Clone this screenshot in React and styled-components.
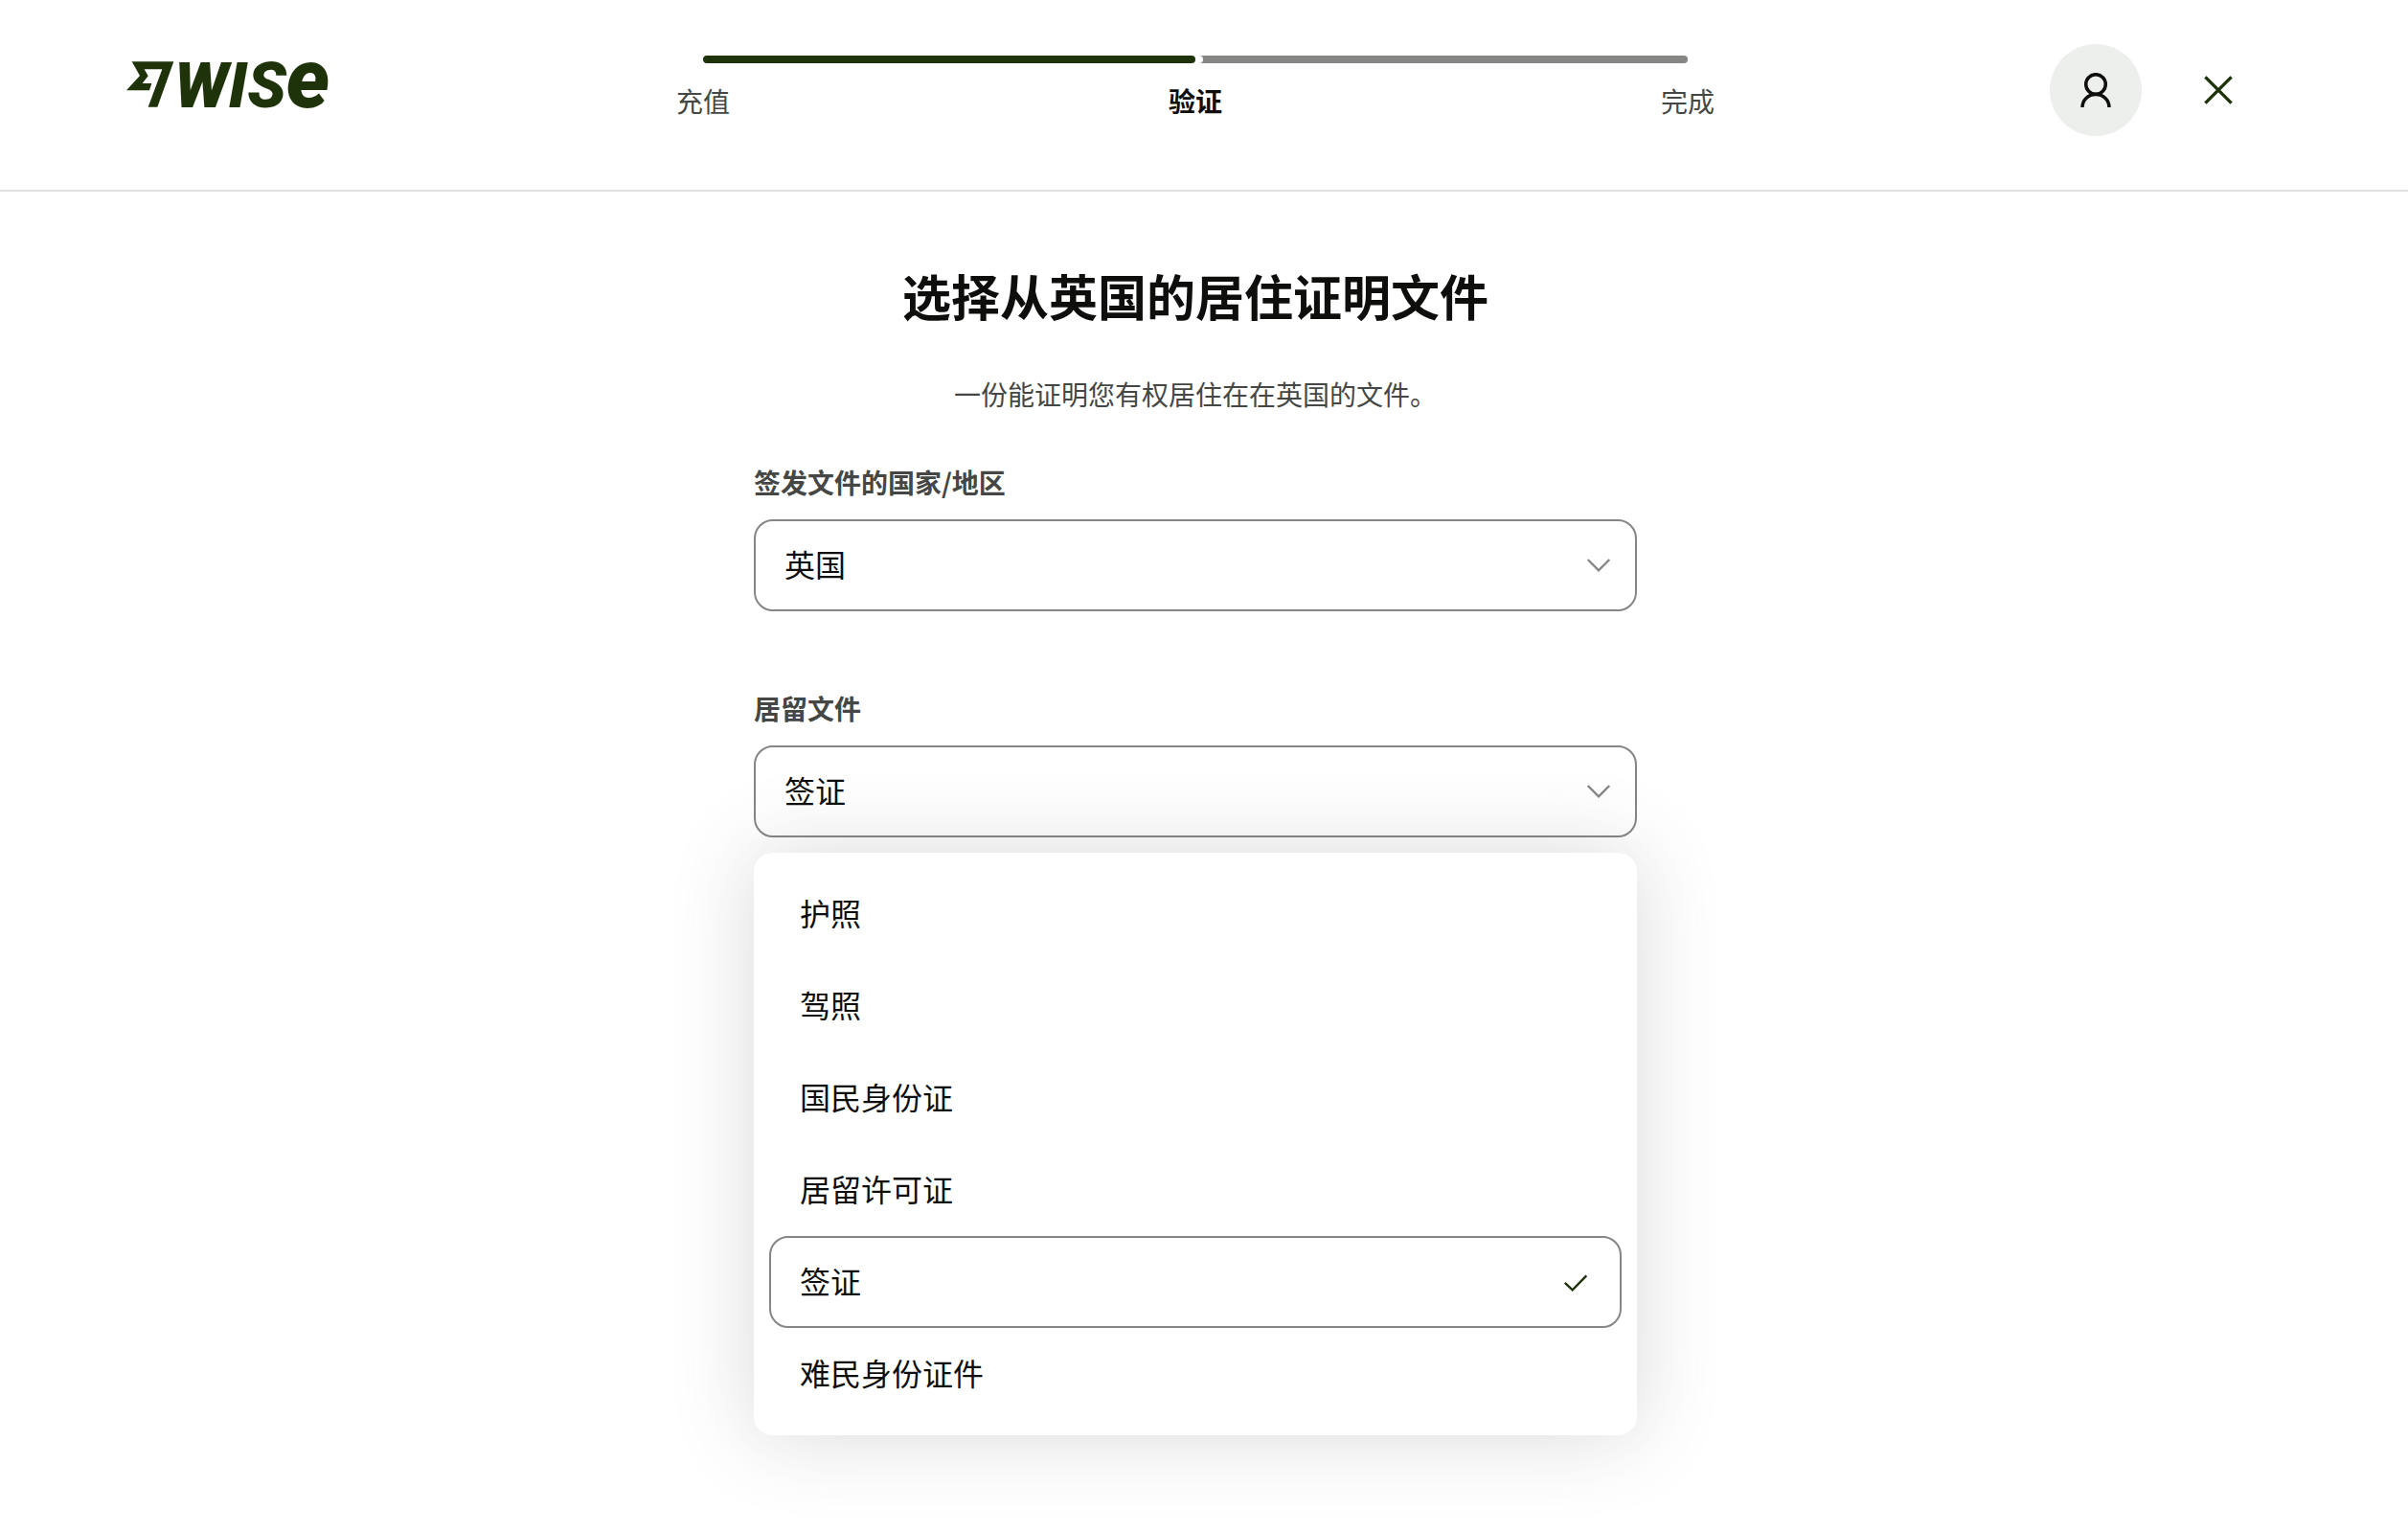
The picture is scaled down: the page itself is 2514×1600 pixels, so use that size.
import React, { useState } from "react";
import styled, { createGlobalStyle, css } from "styled-components";

// variables
const color = {
  forest: "#1f330b",
  ink: "#0e0f0c",
  text: "#454745",
  border: "#868685",
  line: "#e2e2e1",
  neutral: "#edefec",
};

const steps = ["充值", "验证", "完成"];

const documents = [
  "护照",
  "驾照",
  "国民身份证",
  "居留许可证",
  "签证",
  "难民身份证件",
];

function App() {
  const [country, setCountry] = useState("英国");
  const [doc, setDoc] = useState("签证");
  const [open, setOpen] = useState(true);
  const current = 1;

  const toggleMenu = (e) => {
    // the styled list below replaces the native popup
    e.preventDefault();
    setOpen(!open);
  };

  const handlePick = (item) => {
    setDoc(item);
    setOpen(false);
  };

  return (
    <>
      <GlobalStyle />
      <Header>
        <Logo href="#">
          <Flag />
          <Wordmark>
            WIS<span>e</span>
          </Wordmark>
        </Logo>
        <Stepper>
          <Track>
            <Fill style={{ width: `${(current / (steps.length - 1)) * 100}%` }} />
          </Track>
          <StepList>
            {steps.map((step, i) => (
              <Step key={step} $active={i === current}>
                {step}
              </Step>
            ))}
          </StepList>
        </Stepper>
        <Actions>
          <RoundButton type="button" aria-label="账户" $filled>
            <PersonIcon />
          </RoundButton>
          <RoundButton type="button" aria-label="关闭">
            <CloseIcon />
          </RoundButton>
        </Actions>
      </Header>

      <Main>
        <Title>选择从英国的居住证明文件</Title>
        <Subtitle>一份能证明您有权居住在在英国的文件。</Subtitle>
        <Form>
          <Field>
            <Label htmlFor="country">签发文件的国家/地区</Label>
            <SelectBox>
              <Select
                id="country"
                value={country}
                onChange={(e) => setCountry(e.target.value)}
              >
                <option>英国</option>
              </Select>
              <ChevronIcon />
            </SelectBox>
          </Field>

          <Field>
            <Label htmlFor="document">居留文件</Label>
            <SelectBox>
              <Select
                id="document"
                value={doc}
                onMouseDown={toggleMenu}
                onChange={(e) => setDoc(e.target.value)}
              >
                {documents.map((item) => (
                  <option key={item}>{item}</option>
                ))}
              </Select>
              <ChevronIcon />
            </SelectBox>
            {open && (
              <Menu>
                {documents.map((item) => (
                  <li key={item}>
                    <Option
                      type="button"
                      $selected={item === doc}
                      onClick={() => handlePick(item)}
                    >
                      <OptionText>{item}</OptionText>
                      {item === doc && <CheckIcon />}
                    </Option>
                  </li>
                ))}
              </Menu>
            )}
          </Field>
        </Form>
      </Main>
    </>
  );
}

// icons
const Flag = () => (
  <svg width="50" height="48" viewBox="65 72 150 144" aria-hidden="true">
    <path
      fill={color.forest}
      d="M82 73H213L162 215H133L177 97H121L133 118L115 141H144L137 163H65L107 117Z"
    />
  </svg>
);

const PersonIcon = () => (
  <svg width="32" height="36" viewBox="0 0 32 36" fill="none" aria-hidden="true">
    <g stroke={color.ink} strokeWidth="3.5">
      <circle cx="16" cy="12" r="10.3" />
      <path d="M2 36C2 28.5 8 22.4 16 22.4S30 28.5 30 36" />
    </g>
  </svg>
);

const CloseIcon = () => (
  <svg width="32" height="32" viewBox="0 0 32 32" fill="none" aria-hidden="true">
    <path
      d="M2.4 2.4L29.6 29.6M29.6 2.4L2.4 29.6"
      stroke={color.forest}
      strokeWidth="3.4"
    />
  </svg>
);

const CheckIcon = () => (
  <svg width="32" height="32" viewBox="0 0 32 32" fill="none" aria-hidden="true">
    <path
      d="M4.8 16.8L12.7 24.4L27.3 9.4"
      stroke={color.forest}
      strokeWidth="2.4"
    />
  </svg>
);

const Chevron = ({ className }) => (
  <svg
    className={className}
    width="32"
    height="32"
    viewBox="0 0 32 32"
    fill="none"
    aria-hidden="true"
  >
    <path d="M4.7 10L16 21.4L27.3 10" stroke={color.border} strokeWidth="2.4" />
  </svg>
);

const GlobalStyle = createGlobalStyle`
  * {
    box-sizing: border-box;
  }

  body {
    margin: 0;
    background-color: #fff;
    color: ${color.ink};
    font-family: "Noto Sans CJK SC", sans-serif;
  }

  button,
  select {
    font: inherit;
    color: inherit;
  }
`;

const Header = styled.header`
  display: grid;
  grid-template-columns: 1fr minmax(0, 1542px) 1fr;
  align-items: start;
  min-height: 200px;
  padding: 46px 150px 0 132px;
  border-bottom: 2px solid ${color.line};
`;

const Logo = styled.a`
  display: flex;
  height: 48px;
  margin-top: 18px;
  color: ${color.forest};
  text-decoration: none;
`;

const Wordmark = styled.span`
  font-family: Roboto, sans-serif;
  font-size: 67px;
  font-style: italic;
  font-weight: 900;
  line-height: 38px;

  span {
    font-size: 86px;
    line-height: 38px;
  }
`;

const Stepper = styled.nav`
  margin-top: 12px;
`;

const Track = styled.div`
  height: 8px;
  margin: 0 calc(100% / 6);
  border-radius: 4px;
  background-color: ${color.border};
  overflow: hidden;
`;

const Fill = styled.div`
  height: 100%;
  border-radius: 4px;
  background-color: ${color.forest};
  box-shadow: 8px 0 0 #fff;
`;

const StepList = styled.ol`
  display: grid;
  grid-template-columns: repeat(3, 1fr);
  margin: 18px 0 0;
  padding: 0;
  list-style: none;
`;

const Step = styled.li`
  color: ${color.text};
  font-size: 28px;
  line-height: 42px;
  text-align: center;

  ${(props) =>
    props.$active &&
    css`
      color: ${color.ink};
      font-weight: 600;
    `}
`;

const Actions = styled.div`
  display: flex;
  justify-content: flex-end;
  gap: 32px;
`;

const RoundButton = styled.button`
  display: flex;
  justify-content: center;
  align-items: center;
  width: 96px;
  height: 96px;
  padding: 0;
  border: none;
  border-radius: 50%;
  background-color: ${(props) =>
    props.$filled ? color.neutral : "transparent"};
  cursor: pointer;
`;

const Main = styled.main`
  padding: 76px 18px 102px 0;
`;

const Title = styled.h1`
  margin: 0 0 50px;
  font-size: 51px;
  font-weight: 600;
  line-height: 64px;
  text-align: center;
`;

const Subtitle = styled.p`
  margin: 0 0 50px;
  color: ${color.text};
  font-size: 28px;
  line-height: 42px;
  text-align: center;
`;

const Form = styled.form`
  display: flex;
  flex-direction: column;
  gap: 80px;
  max-width: 922px;
  margin: 0 auto;
`;

const Field = styled.div`
  display: flex;
  flex-direction: column;
  gap: 16px;
`;

const Label = styled.label`
  padding-bottom: 2px;
  color: ${color.text};
  font-size: 28px;
  font-weight: 600;
  line-height: 42px;
`;

const SelectBox = styled.div`
  position: relative;
  display: flex;
  align-items: center;
`;

const Select = styled.select`
  width: 100%;
  height: 96px;
  padding: 0 72px 4px 30px;
  border: 2px solid ${color.border};
  border-radius: 20px;
  background-color: transparent;
  font-size: 32px;
  appearance: none;
  cursor: pointer;
`;

const ChevronIcon = styled(Chevron)`
  position: absolute;
  right: 24px;
  pointer-events: none;
`;

const Menu = styled.ul`
  position: relative;
  margin: 0;
  padding: 16px;
  border-radius: 20px;
  background-color: #fff;
  box-shadow: 0 0 88px rgba(69, 71, 69, 0.2);
  list-style: none;
`;

const Option = styled.button`
  display: flex;
  justify-content: space-between;
  align-items: center;
  width: 100%;
  height: 96px;
  padding: 0 30px;
  border: 2px solid
    ${(props) => (props.$selected ? color.border : "transparent")};
  border-radius: 20px;
  background-color: transparent;
  font-size: 32px;
  text-align: left;
  cursor: pointer;
`;

const OptionText = styled.span`
  padding-bottom: 4px;
`;

export default App;
